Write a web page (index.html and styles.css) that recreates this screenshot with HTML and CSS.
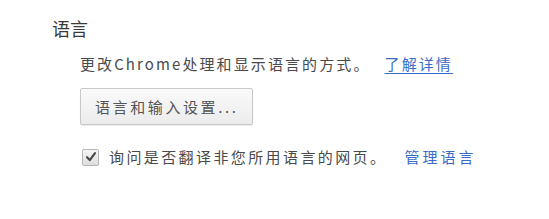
FILE: index.html
```html
<!DOCTYPE html>
<html lang="zh-CN">
<head>
<meta charset="utf-8">
<link rel="stylesheet" href="styles.css">
</head>
<body>
<section class="section">
  <h3 class="title">语言</h3>
  <div class="content">
    <p class="desc">更改Chrome处理和显示语言的方式。<a class="link underline" href="#">了解详情</a></p>
    <button class="btn" type="button">语言和输入设置...</button>
    <label class="check-row">
      <span class="checkbox">
        <svg viewBox="0 0 16 16" width="16" height="16"><path d="M3.5 8.2 L6.6 11.6 L12.6 3.6" fill="none" stroke="#444" stroke-width="2.4" stroke-linecap="round" stroke-linejoin="round"/></svg>
      </span>
      <span class="check-text">询问是否翻译非您所用语言的网页。</span>
      <a class="link" href="#">管理语言</a>
    </label>
  </div>
</section>
</body>
</html>
```
FILE: styles.css
```css
html, body {
  margin: 0;
  padding: 0;
  background: #ffffff;
}
body {
  font-family: "Noto Sans CJK SC", "Liberation Sans", sans-serif;
  color: #4a4a4a;
  width: 549px;
  height: 219px;
  overflow: hidden;
}
.section {
  padding: 16px 0 0 52px;
}
.title {
  margin: 0;
  font-size: 18px;
  font-weight: normal;
  line-height: 24px;
  letter-spacing: 0;
  color: #3a3a3a;
}
.content {
  margin-left: 28px;
  display: flex;
  flex-direction: column;
  align-items: flex-start;
}
.desc {
  margin: 12px 0 0;
  font-size: 15px;
  line-height: 24px;
  letter-spacing: 2.1px;
}
.link {
  color: #3a6cc6;
  text-decoration: none;
  margin-left: 14px;
}
.underline {
  text-decoration: underline;
  text-underline-offset: 3px;
}
.btn {
  margin-top: 12px;
  width: 173px;
  height: 37px;
  padding: 0 0 0 14px;
  text-align: left;
  font-family: inherit;
  font-size: 15px;
  letter-spacing: 2.6px;
  color: #555;
  background: linear-gradient(#fafafa, #ececec);
  border: 1px solid #c8c8c8;
  border-radius: 2px;
  box-shadow: 0 1px 1px rgba(0,0,0,0.08);
}
.check-row {
  margin-top: 20px;
  display: flex;
  align-items: center;
  font-size: 15px;
  line-height: 24px;
  letter-spacing: 2.4px;
}
.checkbox {
  width: 15px;
  height: 15px;
  margin-left: 2px;
  border: 1px solid #b5b5b5;
  border-radius: 2px;
  background: linear-gradient(#f4f4f4, #dedede);
  display: flex;
  align-items: center;
  justify-content: center;
}
.checkbox svg {
  width: 14px;
  height: 14px;
}
.check-text {
  margin-left: 10px;
}
.check-row .link {
  margin-left: 17px;
  letter-spacing: 3px;
}
```
